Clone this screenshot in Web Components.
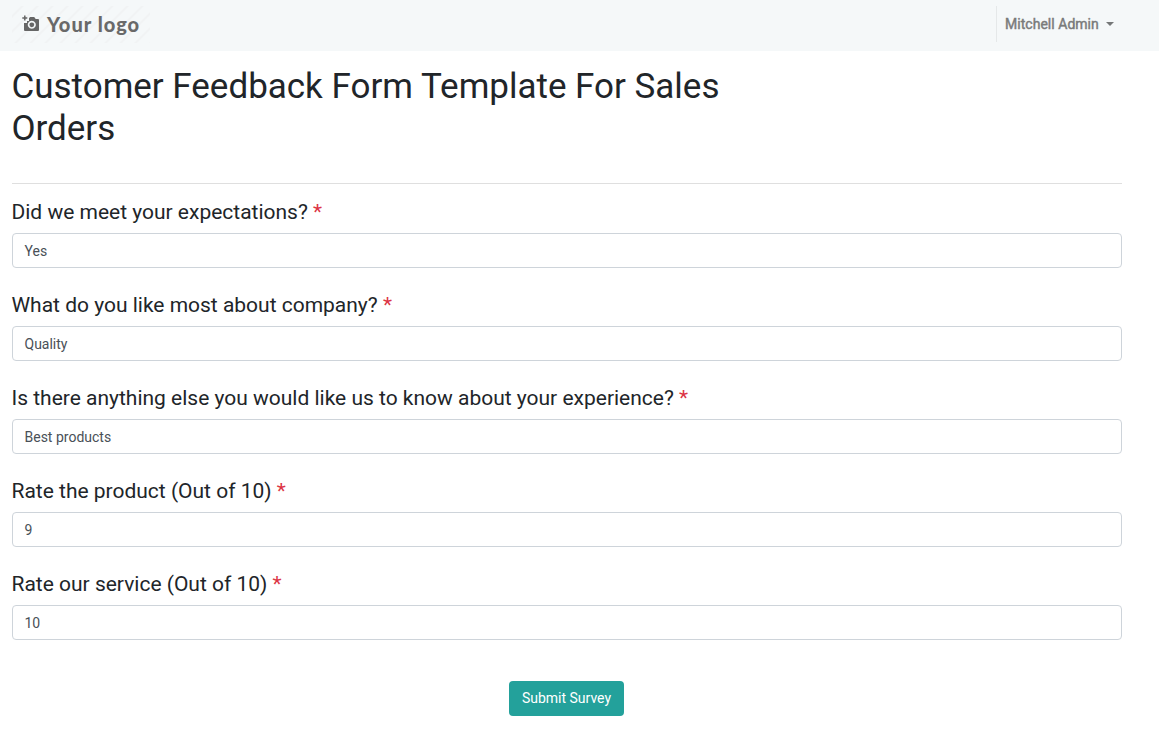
<!DOCTYPE html>
<html lang="en"><head><meta charset="utf-8"><title>Survey</title>
<style>body{margin:0;background:#fff;font:14px/21px Roboto,sans-serif;color:#212529}</style></head>
<body><survey-page></survey-page>
<script>
const define=(name,html)=>customElements.define(name,class extends HTMLElement{constructor(){super();this.attachShadow({mode:'open'}).innerHTML=html}});
define('brand-logo',`<style>:host{display:flex;align-items:center;width:138px;height:37px;margin-left:-3px;background:repeating-linear-gradient(135deg,#f5f8f9 0 6px,#f1f3f4 7px 8px,#f5f8f9 9px 10.600px)}
svg{width:18px;height:17px;margin:0 7px 2px 10px}b{font:900 20px/24px Lato,sans-serif;letter-spacing:1px;color:#696969;white-space:nowrap}</style>
<svg viewBox="0 0 18 17"><path fill="#666" fill-rule="evenodd" d="M7 3l1.200-1h4l1.500 2H16q1 0 1 1v10q0 1-1 1H3q-1 0-1-1V8h3V6h2zM9.800 5.800a4 4 0 1 0 .01 0z"/><path d="M2.800.5v5M.3 3h5" stroke="#666" stroke-width="1.500"/><circle cx="9.800" cy="9.800" r="2.400" fill="#666"/></svg><b>Your logo</b>`);
define('site-header',`<style>:host{display:flex;justify-content:space-between;align-items:center;height:51px;box-sizing:border-box;padding:0 45px 3px 15px;background:#f5f8f9}
.user{display:flex;align-items:center;box-sizing:border-box;width:118px;height:36px;border-left:1px solid #e5e8e9;padding-left:8px;color:#7a7b7b;-webkit-text-stroke:.45px #7a7b7b;letter-spacing:.03px;white-space:nowrap}.user i{border:4.500px solid transparent;border-top-color:#757778;border-bottom:0;margin:0 0 1px auto}</style>
<brand-logo></brand-logo><div class="user"><slot></slot><i></i></div>`);
define('survey-question',`<style>:host{display:block;margin-bottom:25px}h2{margin:0 0 8px;font:400 20.990px/25px Roboto,sans-serif}h2 span{color:#dc3545}
.box{height:35px;box-sizing:border-box;border:1px solid #ced4da;border-radius:4px;padding:7px 12px 5px;color:#495057}</style>
<h2><slot name="label"></slot> <span>*</span></h2><div class="box"><slot></slot></div>`);
define('submit-button',`<style>:host{display:block;width:115px;margin:41px auto 0}button{width:100%;height:35px;border:0;border-radius:4px;background:#23a19b;color:#fff;font:14px/21px Roboto,sans-serif;padding:0}</style><button><slot></slot></button>`);
define('survey-page',`<style>:host{display:block}main{padding:15px 37.500px 0 11.500px}h1{font:400 34.980px/42px Roboto,sans-serif;margin:0;max-width:740px}hr{border:0;border-top:1px solid #dfdfdf;margin:33px 0 16px}</style>
<site-header>Mitchell Admin</site-header><main><h1>Customer Feedback Form Template For Sales Orders</h1><hr>
<survey-question><span slot="label">Did we meet your expectations?</span>Yes</survey-question>
<survey-question><span slot="label">What do you like most about company?</span>Quality</survey-question>
<survey-question><span slot="label">Is there anything else you would like us to know about your experience?</span>Best products</survey-question>
<survey-question><span slot="label">Rate the product (Out of 10)</span>9</survey-question>
<survey-question><span slot="label">Rate our service (Out of 10)</span>10</survey-question>
<submit-button>Submit Survey</submit-button></main>`);
</script></body></html>
